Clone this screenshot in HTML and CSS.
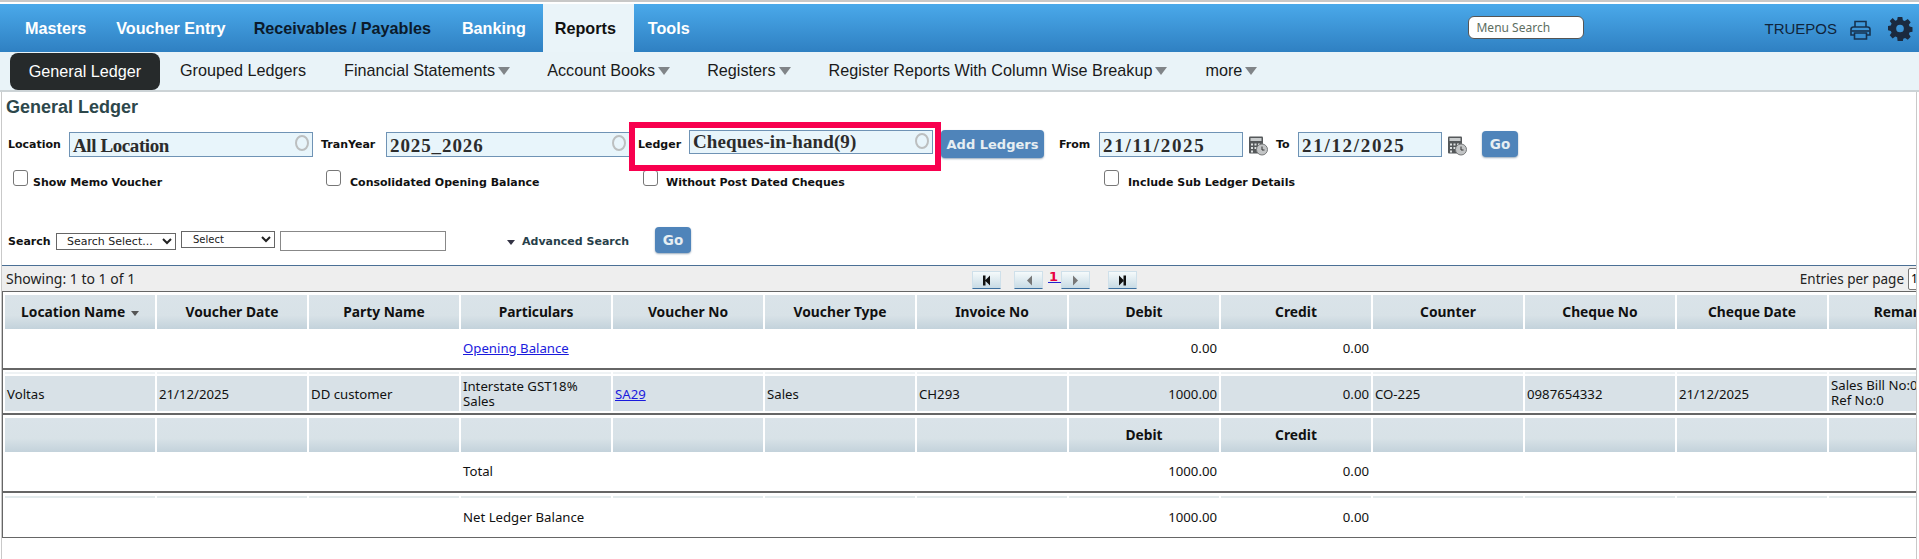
FILE: index.html
```html
<!DOCTYPE html>
<html lang="en">
<head>
<meta charset="utf-8">
<title>General Ledger</title>
<link rel="stylesheet" href="styles.css">
</head>
<body>
<div class="topstrip"></div>
<nav class="mainnav">
  <a class="m m-masters">Masters</a>
  <a class="m m-voucher">Voucher Entry</a>
  <a class="m m-recv">Receivables / Payables</a>
  <a class="m m-bank">Banking</a>
  <a class="m m-reports">Reports</a>
  <a class="m m-tools">Tools</a>
  <div class="navright">
    <input class="menusearch" placeholder="Menu Search">
    <span class="user">TRUEPOS</span>
    <svg class="printer" width="21" height="20" viewBox="0 0 21 20" fill="none" stroke="#16324f" stroke-width="1.6"><path d="M5 7V1.5h11V7"/><path d="M4.500 15H1V9.500Q1 7 3.500 7h14Q20 7 20 9.500V15h-3.500"/><path d="M1.500 11h18"/><path d="M4.500 13h12v6h-12z"/></svg>
    <svg class="gear" width="25" height="24" viewBox="0 0 24 24"><path fill="#1b2a3f" fill-rule="evenodd" d="M9.600 0h4.800l.6 3.300 1.900.8L20.100 2.200l3 3.200-1.900 2.700.8 1.900 3 .6v4.700l-3 .6-.8 1.900 1.900 2.700-3 3.200-2.800-1.900-1.900.8-.6 3.300H9.600L9 21.200l-1.900-.8-2.800 1.900-3-3.200 1.900-2.700-.8-1.900-3-.6V9.400l3-.6.8-1.900L1.300 4.200l3-3.100L7.100 4l1.900-.8zM12 8a4 4 0 1 0 0 8 4 4 0 0 0 0-8z" transform="scale(.96 .96)"/></svg>
  </div>
</nav>
<nav class="subnav">
  <a class="s s-active">General Ledger</a>
  <a class="s s-grouped">Grouped Ledgers</a>
  <a class="s s-fin">Financial Statements<i class="caret"></i></a>
  <a class="s s-acc">Account Books<i class="caret"></i></a>
  <a class="s s-reg">Registers<i class="caret"></i></a>
  <a class="s s-col">Register Reports With Column Wise Breakup<i class="caret"></i></a>
  <a class="s s-more">more<i class="caret"></i></a>
</nav>
<main class="page">
  <h1 class="title">General Ledger</h1>
  <div class="filters">
    <label class="lbl l-location">Location</label>
    <div class="combo combo-loc"><span>All Location</span><i class="ring"></i></div>
    <label class="lbl l-year">TranYear</label>
    <div class="combo combo-year"><span>2025_2026</span><i class="ring"></i></div>
    <div class="redbox">
      <label class="lbl l-ledger">Ledger</label>
      <div class="combo combo-ledger"><span>Cheques-in-hand(9)</span><i class="ring"></i></div>
    </div>
    <button class="btn btn-add">Add Ledgers</button>
    <label class="lbl l-from">From</label>
    <div class="combo date"><span>21/11/2025</span></div>
    <svg class="cal" width="20" height="21" viewBox="0 0 20 20"><rect x="1" y="1" width="14" height="17" rx="1" fill="#55585a"/><rect x="2.500" y="2.500" width="11" height="3" fill="#c9cccd"/><path d="M3 8h2v2H3zM6.500 8h2v2h-2zM10 8h2v2h-2zM3 11.500h2v2H3zM6.500 11.500h2v2h-2zM3 15h2v2H3z" fill="#dfe2e2"/><circle cx="14" cy="14" r="5.500" fill="#c2c4c5" stroke="#77797a"/><path d="M14 11v3.500h2.500" stroke="#333" fill="none"/></svg>
    <label class="lbl l-to">To</label>
    <div class="combo date"><span>21/12/2025</span></div>
    <svg class="cal" width="20" height="21" viewBox="0 0 20 20"><rect x="1" y="1" width="14" height="17" rx="1" fill="#55585a"/><rect x="2.500" y="2.500" width="11" height="3" fill="#c9cccd"/><path d="M3 8h2v2H3zM6.500 8h2v2h-2zM10 8h2v2h-2zM3 11.500h2v2H3zM6.500 11.500h2v2h-2zM3 15h2v2H3z" fill="#dfe2e2"/><circle cx="14" cy="14" r="5.500" fill="#c2c4c5" stroke="#77797a"/><path d="M14 11v3.500h2.500" stroke="#333" fill="none"/></svg>
    <button class="btn btn-go btn-go-top">Go</button>
  </div>
  <div class="checks">
    <label class="chk c1"><input type="checkbox"><span>Show Memo Voucher</span></label>
    <label class="chk c2"><input type="checkbox"><span>Consolidated Opening Balance</span></label>
    <label class="chk c3"><input type="checkbox"><span>Without Post Dated Cheques</span></label>
    <label class="chk c4"><input type="checkbox"><span>Include Sub Ledger Details</span></label>
  </div>
  <div class="search">
    <label class="lbl l-search">Search</label>
    <select class="sel sel1"><option>Search Select...</option></select>
    <select class="sel sel2"><option>Select</option></select>
    <input class="searchbox">
    <a class="adv"><i class="advcaret"></i>Advanced Search</a>
    <button class="btn btn-go">Go</button>
  </div>
  <div class="pager">
    <span class="showing">Showing: 1 to 1 of 1</span>
    <div class="pagerbtns">
      <button class="pg pg-first"><svg width="9" height="11" viewBox="0 0 9 10"><path d="M1 0h2.500v10H1zM8 0v10L3 5z" fill="#111"/></svg></button>
      <button class="pg pg-prev"><svg width="6" height="11" viewBox="0 0 6 10"><path d="M6 0v10L1 5z" fill="#777"/></svg></button>
      <a class="pnum">1</a>
      <button class="pg pg-next"><svg width="6" height="11" viewBox="0 0 6 10"><path d="M0 0v10l5-5z" fill="#777"/></svg></button>
      <button class="pg pg-last"><svg width="9" height="11" viewBox="0 0 9 10"><path d="M5.500 0H8v10H5.500zM1 0v10l5-5z" fill="#111"/></svg></button>
    </div>
    <div class="entries"><span>Entries per page</span><input class="perpage" value="10"></div>
  </div>
  <div class="ledger">
    <div class="row head">
      <div class="c">Location Name <i class="sortcaret"></i></div><div class="c">Voucher Date</div><div class="c">Party Name</div><div class="c">Particulars</div><div class="c">Voucher No</div><div class="c">Voucher Type</div><div class="c">Invoice No</div><div class="c">Debit</div><div class="c">Credit</div><div class="c">Counter</div><div class="c">Cheque No</div><div class="c">Cheque Date</div><div class="c">Remarks</div>
    </div>
    <div class="row body ruled">
      <div class="c"></div><div class="c"></div><div class="c"></div><div class="c"><a class="link">Opening Balance</a></div><div class="c"></div><div class="c"></div><div class="c"></div><div class="c num">0.00</div><div class="c num">0.00</div><div class="c"></div><div class="c"></div><div class="c"></div><div class="c"></div>
    </div>
    <div class="row thin"><div class="c"></div><div class="c"></div><div class="c"></div><div class="c"></div><div class="c"></div><div class="c"></div><div class="c"></div><div class="c"></div><div class="c"></div><div class="c"></div><div class="c"></div><div class="c"></div><div class="c"></div></div>
    <div class="row shaded">
      <div class="c">Voltas</div><div class="c">21/12/2025</div><div class="c">DD customer</div><div class="c">Interstate GST18% Sales</div><div class="c"><a class="link">SA29</a></div><div class="c">Sales</div><div class="c">CH293</div><div class="c num">1000.00</div><div class="c num">0.00</div><div class="c">CO-225</div><div class="c">0987654332</div><div class="c">21/12/2025</div><div class="c nowrap">Sales Bill No:0<br>Ref No:0</div>
    </div>
    <div class="rule"></div>
    <div class="row head head2">
      <div class="c"></div><div class="c"></div><div class="c"></div><div class="c"></div><div class="c"></div><div class="c"></div><div class="c"></div><div class="c">Debit</div><div class="c">Credit</div><div class="c"></div><div class="c"></div><div class="c"></div><div class="c"></div>
    </div>
    <div class="row body ruled">
      <div class="c"></div><div class="c"></div><div class="c"></div><div class="c">Total</div><div class="c"></div><div class="c"></div><div class="c"></div><div class="c num">1000.00</div><div class="c num">0.00</div><div class="c"></div><div class="c"></div><div class="c"></div><div class="c"></div>
    </div>
    <div class="row thin thin2"><div class="c"></div><div class="c"></div><div class="c"></div><div class="c"></div><div class="c"></div><div class="c"></div><div class="c"></div><div class="c"></div><div class="c"></div><div class="c"></div><div class="c"></div><div class="c"></div><div class="c"></div></div>
    <div class="row body">
      <div class="c"></div><div class="c"></div><div class="c"></div><div class="c">Net Ledger Balance</div><div class="c"></div><div class="c"></div><div class="c"></div><div class="c num">1000.00</div><div class="c num">0.00</div><div class="c"></div><div class="c"></div><div class="c"></div><div class="c"></div>
    </div>
  </div>
</main>
</body>
</html>
```
FILE: styles.css
```css
* { box-sizing: border-box; }
html, body { margin: 0; padding: 0; height: 100%; overflow: hidden; background: #fff; }
body { font-family: "Liberation Sans", Arial, sans-serif; color: #111; }

.topstrip { height: 2px; background: #c8c8c8; margin-bottom: 2px; }

.mainnav { height: 48px; display: flex; align-items: center; background: linear-gradient(#4aa9ea, #2f80c2); }
.m { font-size: 16.2px; font-weight: bold; color: #fff; white-space: nowrap; }
.m-masters { margin-left: 25px; }
.m-voucher { margin-left: 30px; }
.m-recv { margin-left: 28px; color: #0b1a2b; }
.m-bank { margin-left: 31px; }
.m-reports { margin-left: 17px; align-self: stretch; width: 91px; padding-left: 12px; background: #eaf4f9; color: #111; display: flex; align-items: center; }
.m-tools { margin-left: 14px; }
.navright { margin-left: auto; display: flex; align-items: center; }
.menusearch { width: 116px; height: 23px; margin-top: -1px; border: 1px solid #555; border-radius: 6px; background: #fff; padding: 0 7px; font: 12px "Noto Sans", sans-serif; }
.menusearch::placeholder { color: #5d6e5f; }
.user { margin-left: 180px; font-size: 15px; color: #10243a; }
.printer { margin-left: 13px; margin-top: 4px; }
.gear { margin-left: 17px; margin-right: 6px; margin-top: 1px; }

.subnav { height: 40px; display: flex; align-items: center; background: #e9f3f8; border-bottom: 2px solid #ccd3d6; }
.s { font-size: 16.2px; color: #1a1a1a; white-space: nowrap; display: flex; align-items: center; margin-top: -2px; }
.caret { width: 0; height: 0; margin-left: 3px; margin-top: 2px; border-left: 6px solid transparent; border-right: 6px solid transparent; border-top: 8px solid #808488; }
.s-active { margin: 1px 0 0 10px; width: 150px; height: 37px; background: #262a2b; color: #fff; border-radius: 8px; justify-content: center; }
.s-grouped { margin-left: 20px; }
.s-fin { margin-left: 38px; }
.s-acc { margin-left: 37px; }
.s-reg { margin-left: 37px; }
.s-col { margin-left: 38px; }
.s-more { margin-left: 38px; }

.page { position: relative; margin-left: 1px; width: 1916px; height: 467px; border-left: 1px solid #c9c9c9; border-right: 1px solid #c9c9c9; overflow: hidden; }
.title { margin: 0; height: 30px; padding: 3px 0 0 4px; font-size: 18px; line-height: 24px; font-weight: bold; color: #2d474b; }

.lbl { font-family: "DejaVu Sans", sans-serif; font-weight: bold; font-size: 11px; color: #111; white-space: nowrap; display: block; }
.filters { height: 48px; display: flex; align-items: flex-start; padding-top: 10px; }
.filters > .lbl { line-height: 25px; }
.l-location { margin-left: 6px; width: 61px; }
.l-year { margin-left: 8px; width: 65px; }
.l-from { margin-left: 15px; width: 40px; }
.l-to { margin-left: 8px; width: 22px; }

.combo { width: 244px; height: 25px; background: #e8f5fb; border: 1px solid #6f93b5; display: flex; align-items: center; justify-content: space-between; padding: 2px 3px 0 3px; font-family: "Liberation Serif", serif; font-weight: bold; font-size: 19px; letter-spacing: .1px; color: #2c2c2c; flex: none; }
.combo-loc { letter-spacing: -.4px; }
.combo-year { letter-spacing: .9px; }
.combo.date { width: 144px; letter-spacing: 1.7px; }
.ring { width: 14px; height: 16px; border: 2.500px solid #bcbfc0; border-radius: 50%; flex: none; margin-top: -5px; }
.redbox { margin: -10px 0 0 -1px; width: 312px; height: 49px; border: 6px solid #f8004e; display: flex; padding: 2px 0 0 3px; background: #fff; position: relative; flex: none; }
.redbox .lbl { width: 51px; line-height: 25px; padding-top: 2px; }
.combo-ledger { height: 24px; padding-top: 0; }
.combo-ledger .ring { margin-top: -3px; }
.btn { border: 0; border-radius: 4px; background: #4f84ba; color: #e6eef2; font-family: "DejaVu Sans", sans-serif; font-weight: bold; font-size: 13px; box-shadow: 0 1px 2px #9ab; padding: 0; flex: none; }
.btn-add { width: 103px; height: 28px; margin-top: -2px; }
.cal { margin: 3px 0 0 5px; flex: none; }
.btn-go { width: 36px; height: 26px; font-size: 13.5px; }
.btn-go-top { margin: -1px 0 0 15px; }

.checks { height: 20px; margin-top: 0; display: flex; align-items: flex-start; }
.chk { display: flex; align-items: flex-start; font-family: "DejaVu Sans", sans-serif; font-weight: bold; font-size: 11px; white-space: nowrap; flex: none; }
.chk input { appearance: none; margin: 0; width: 15px; height: 16px; border: 1px solid #777; border-radius: 3px; background: #fff; }
.chk span { margin: 6px 0 0 5px; line-height: 14px; }
.c1 { margin-left: 11px; width: 313px; }
.c2 { width: 317px; }
.c2 span { margin-left: 9px; }
.c3 { width: 461px; }
.c3 span { margin-left: 8px; }
.c4 span { margin-left: 9px; }

.search { margin-top: 37px; height: 26px; display: flex; align-items: flex-start; }
.l-search { margin: 8px 0 0 6px; width: 48px; line-height: 14px; }
.sel { height: 17px; border: 1px solid #666; background: #fff; font: 11px "DejaVu Sans", sans-serif; color: #222; padding: 0 0 0 6px; border-radius: 0; flex: none; }
.sel1 { width: 120px; margin-top: 6px; }
.sel2 { width: 94px; margin: 4px 0 0 5px; font-size: 10px; padding-left: 7px; }
.searchbox { width: 166px; height: 20px; margin: 4px 0 0 5px; border: 1px solid #888; flex: none; }
.adv { margin: 8px 0 0 61px; display: flex; align-items: center; font-family: "DejaVu Sans", sans-serif; font-weight: bold; font-size: 11px; color: #27404a; white-space: nowrap; width: 148px; line-height: 14px; }
.advcaret { width: 0; height: 0; margin-right: 7px; border-left: 4.500px solid transparent; border-right: 4.500px solid transparent; border-top: 5px solid #334; }

.pager { margin-top: 12px; height: 27px; background: #eee; border-top: 1px solid #4a6f95; border-bottom: 1px solid #666; display: flex; position: relative; font: 13.5px "Noto Sans", sans-serif; }
.showing { margin-left: 4px; line-height: 25px; font-size: 14px; color: #222; width: 966px; flex: none; }
.pagerbtns { display: flex; align-items: flex-start; padding-top: 5px; flex: none; }
.pg { width: 29px; height: 18px; padding: 0; display: flex; align-items: center; justify-content: center; background: linear-gradient(#f5fafb, #c8dbe5); border: 1px solid #cfe0ea; border-bottom: 1px solid #3c6f9f; flex: none; }
.pg-prev { margin-left: 13px; }
.pnum { width: 13px; margin: -1px 0 0 5px; height: 13px; text-align: left; padding-left: 1px; color: #e8003f; font: bold 13px/13px "DejaVu Sans", sans-serif; border-bottom: 1px solid #2222cc; flex: none; }
.pg-last { margin-left: 18px; }
.entries { margin-left: auto; display: flex; align-items: center; height: 25px; }
.entries span { margin-right: 4px; color: #222; }
.perpage { width: 30px; height: 22px; margin-right: -22px; border: 1px solid #777; border-radius: 2px; background: #fff; font: 12px "Noto Sans", sans-serif; padding: 0 2px; }

.ledger { border-left: 1px solid #666; border-bottom: 1px solid #666; width: 1915px; margin-top: 0; padding-top: 3px; font: 13.2px "Noto Sans", sans-serif; color: #111; }
.row { display: flex; gap: 2px; padding-left: 2px; }
.c { flex: 0 0 150px; padding: 0 2px; min-width: 0; }
.num { text-align: right; }
.nowrap { white-space: nowrap; }
.head { height: 34px; }
.head .c { background: linear-gradient(#dae3e9 0, #d8e2e7 60%, #c3d2db 100%); text-align: center; font-weight: bold; font-size: 13.8px; line-height: 34px; color: #111; white-space: nowrap; padding: 0; }
.head2 { margin-top: 3px; }
.sortcaret { display: inline-block; width: 0; height: 0; margin-left: 2px; vertical-align: middle; border-left: 4.500px solid transparent; border-right: 4.500px solid transparent; border-top: 5px solid #555; }
.body { height: 39px; }
.body .c { line-height: 39px; }
.ruled { height: 41px; border-bottom: 2px solid #666; }
.thin { height: 6px; padding-top: 2px; }
.thin .c { background: #eef2f4; height: 2px; }
.thin2 { height: 5px; padding-top: 3px; }
.thin2 .c { background: #e2eaec; }
.shaded { height: 35px; }
.shaded .c { background: #d8e1e7; display: flex; align-items: center; line-height: 15px; padding-top: 1px; }
.shaded .num { justify-content: flex-end; }
.shaded .nowrap { display: block; padding-top: 2px; }
.rule { margin-top: 2px; height: 2px; background: #666; }
.link { color: #1a1add; text-decoration: underline; }
```
